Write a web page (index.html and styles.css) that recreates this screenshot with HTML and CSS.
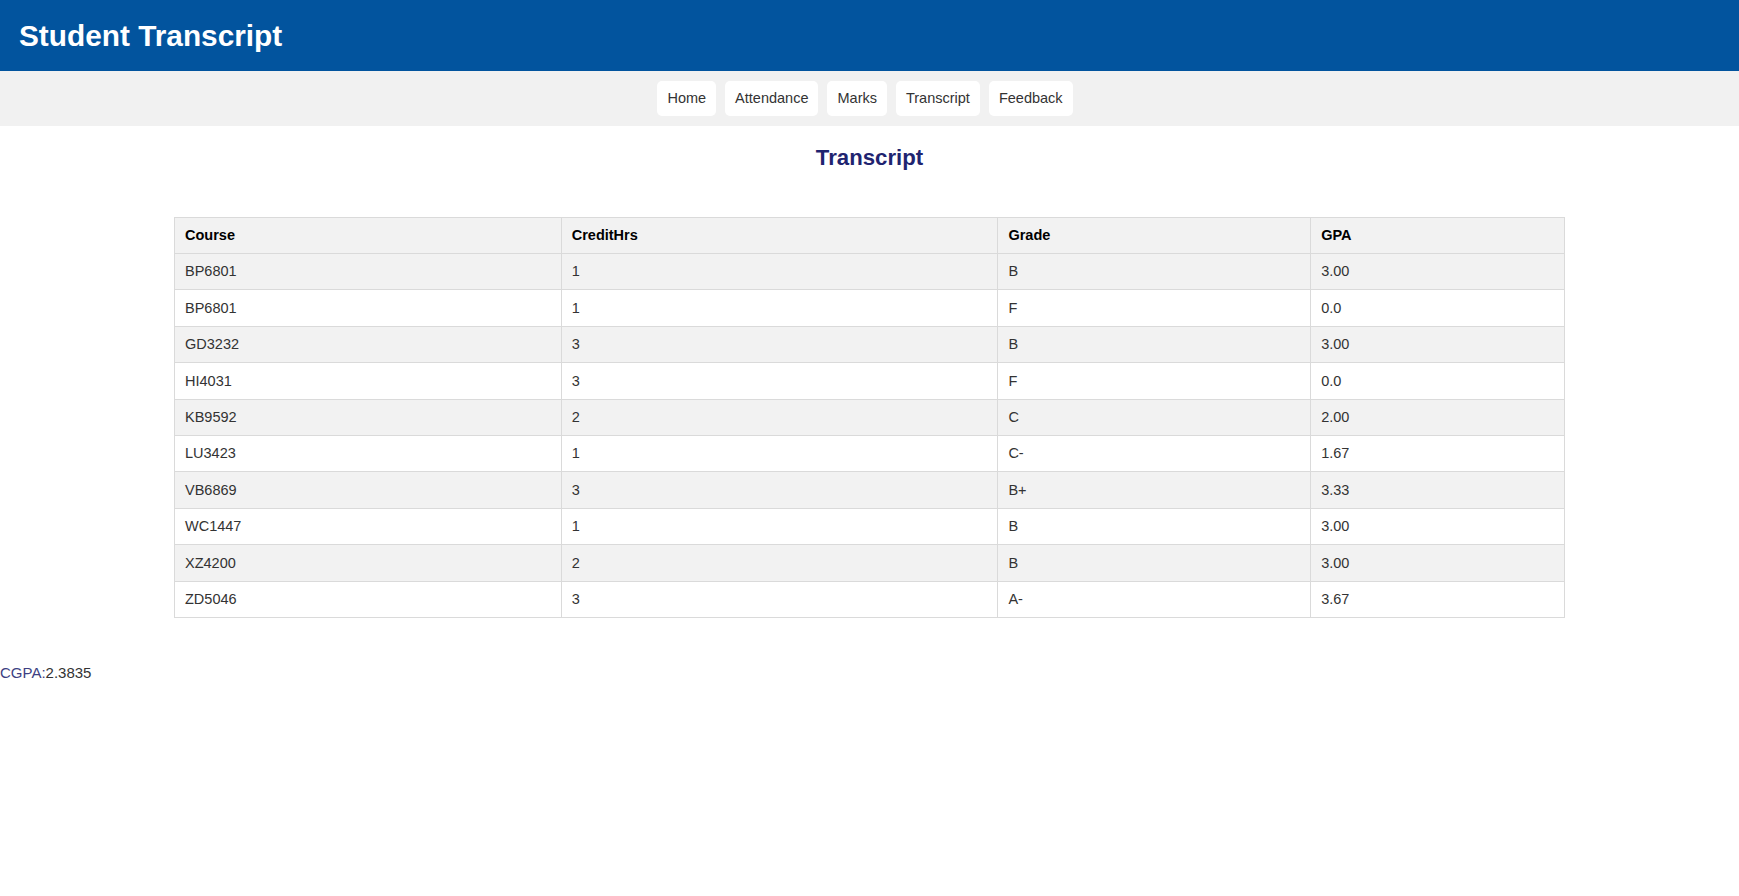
FILE: index.html
```html
<!DOCTYPE html>
<html lang="en">
<head>
<meta charset="utf-8">
<title>Student Transcript</title>
<link rel="stylesheet" href="styles.css">
</head>
<body>
<header class="topbar">
  <h1 class="site-title">Student Transcript</h1>
</header>
<nav class="nav">
  <a class="nav-btn" href="#">Home</a>
  <a class="nav-btn" href="#">Attendance</a>
  <a class="nav-btn" href="#">Marks</a>
  <a class="nav-btn" href="#">Transcript</a>
  <a class="nav-btn" href="#">Feedback</a>
</nav>
<main class="content">
  <h2 class="page-title">Transcript</h2>
  <table class="transcript">
    <colgroup>
      <col class="c-course">
      <col class="c-credit">
      <col class="c-grade">
      <col class="c-gpa">
    </colgroup>
    <tr><th>Course</th><th>CreditHrs</th><th>Grade</th><th>GPA</th></tr>
    <tr><td>BP6801</td><td>1</td><td>B</td><td>3.00</td></tr>
    <tr><td>BP6801</td><td>1</td><td>F</td><td>0.0</td></tr>
    <tr><td>GD3232</td><td>3</td><td>B</td><td>3.00</td></tr>
    <tr><td>HI4031</td><td>3</td><td>F</td><td>0.0</td></tr>
    <tr><td>KB9592</td><td>2</td><td>C</td><td>2.00</td></tr>
    <tr><td>LU3423</td><td>1</td><td>C-</td><td>1.67</td></tr>
    <tr><td>VB6869</td><td>3</td><td>B+</td><td>3.33</td></tr>
    <tr><td>WC1447</td><td>1</td><td>B</td><td>3.00</td></tr>
    <tr><td>XZ4200</td><td>2</td><td>B</td><td>3.00</td></tr>
    <tr><td>ZD5046</td><td>3</td><td>A-</td><td>3.67</td></tr>
  </table>
  <p class="cgpa"><span class="cgpa-label">CGPA:</span><span class="cgpa-value">2.3835</span></p>
</main>
</body>
</html>
```

FILE: styles.css
```css
html, body {
  margin: 0;
  padding: 0;
  background: #ffffff;
  font-family: "Liberation Sans", Arial, sans-serif;
  color: #333333;
}

.topbar {
  background: #02549e;
  height: 71px;
  display: flex;
  align-items: center;
  padding: 0 19px;
  box-sizing: border-box;
}

.site-title {
  margin: 0;
  color: #ffffff;
  font-size: 29.8px;
  font-weight: bold;
  line-height: 34px;
}

.nav {
  background: #f1f1f1;
  display: flex;
  justify-content: center;
  gap: 9px;
  padding: 10px 9px 10px 0;
}

.nav-btn {
  display: block;
  background: #ffffff;
  color: #333333;
  text-decoration: none;
  font-size: 14.5px;
  line-height: 17px;
  padding: 9px 10px;
  border-radius: 5px;
}

.content {
  padding: 0;
}

.page-title {
  margin: 19px 0 0;
  text-align: center;
  color: #1f2470;
  font-size: 22.2px;
  font-weight: bold;
  line-height: 25.5px;
}

.transcript {
  width: 1391px;
  margin: 46px auto 0;
  border-collapse: collapse;
  font-size: 14.5px;
}

.c-course { width: 387px; }
.c-credit { width: 437px; }
.c-grade { width: 313px; }
.c-gpa { width: 254px; }

.transcript th,
.transcript td {
  border: 1px solid #dadada;
  text-align: left;
  padding: 9.5px 10px 9.5px 10px;
  line-height: 16.4px;
}

.transcript th {
  color: #000000;
  font-weight: bold;
}

.transcript tr:nth-child(even) td,
.transcript tr:first-child th {
  background: #f2f2f2;
}

.transcript td {
  color: #333333;
}

.cgpa {
  margin: 46px 0 0;
  font-size: 15px;
  line-height: 17px;
}

.cgpa-label {
  color: #3d3f82;
}

.cgpa-value {
  color: #333333;
}
```
